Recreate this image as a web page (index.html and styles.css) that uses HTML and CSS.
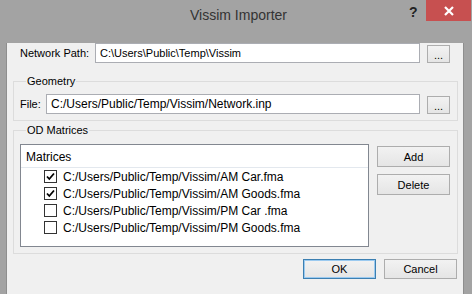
FILE: index.html
```html
<!DOCTYPE html>
<html lang="en">
  <head>
    <meta charset="utf-8" />
    <title>Vissim Importer</title>
    <link rel="stylesheet" href="styles.css">
  </head>
  <body>
    <div class="window">
      <div class="titlebar">
        <div class="title">Vissim Importer</div>
        <div class="help">?</div>
        <div class="close">
          <svg width="12" height="10" viewBox="0 0 12 10">
            <path d="M2 1 L10 9 M10 1 L2 9" stroke="#fff" stroke-width="2.2" />
          </svg>
        </div>
      </div>
      <div class="client">
        <div class="row path-row">
          <label class="path-label">Network Path:</label>
          <div class="input path-input">C:\Users\Public\Temp\Vissim</div>
          <button class="btn browse">...</button>
        </div>

        <fieldset class="group geometry">
          <legend>Geometry</legend>
          <div class="row">
            <label class="file-label">File:</label>
            <div class="input file-input">C:/Users/Public/Temp/Vissim/Network.inp</div>
            <button class="btn browse">...</button>
          </div>
        </fieldset>

        <fieldset class="group od">
          <legend>OD Matrices</legend>
          <div class="od-body">
            <div class="list">
              <div class="list-header">Matrices</div>
              <div class="item"><span class="check on"></span>C:/Users/Public/Temp/Vissim/AM Car.fma</div>
              <div class="item"><span class="check on"></span>C:/Users/Public/Temp/Vissim/AM Goods.fma</div>
              <div class="item"><span class="check"></span>C:/Users/Public/Temp/Vissim/PM Car .fma</div>
              <div class="item"><span class="check"></span>C:/Users/Public/Temp/Vissim/PM Goods.fma</div>
            </div>
            <div class="side">
              <button class="btn wide">Add</button>
              <button class="btn wide">Delete</button>
            </div>
          </div>
        </fieldset>

        <div class="footer">
          <button class="btn wide default">OK</button>
          <button class="btn wide">Cancel</button>
        </div>
      </div>
    </div>
  </body>
</html>
```

FILE: styles.css
```css
* {
  margin: 0;
  box-sizing: border-box;
}
body {
  font-family: "Liberation Sans", Arial, sans-serif;
  font-size: 11px;
  color: #000;
  background: #a3a3a3;
}
.window {
  width: 472px;
  height: 294px;
  background: #a3a3a3;
  padding: 0 8px 0 6px;
}
.titlebar {
  height: 30px;
  display: flex;
}
.title {
  flex: 1;
  text-align: center;
  font-size: 14px;
  color: #333;
  padding-top: 7px;
  padding-left: 62px;
}
.help {
  width: 20px;
  font-size: 14px;
  font-weight: bold;
  color: #222;
  padding-top: 4px;
  margin-right: -3px;
}
.close {
  width: 45px;
  height: 21px;
  background: #c75050;
  margin-right: -7px;
  display: flex;
  justify-content: center;
  align-items: center;
}
.client {
  height: 258px;
  background: #f0f0f0;
  border: 1px solid #8e8e8e;
  border-top: none;
  padding: 0 5px 0 6px;
}
.row {
  display: flex;
  align-items: center;
  height: 20px;
}
.path-row {
  margin-top: 13px;
  padding-left: 7px;
}
.path-label {
  width: 75px;
}
.input {
  height: 20px;
  background: #fff;
  border: 1px solid #abadb3;
  padding: 3px 4px;
  line-height: 13px;
  white-space: nowrap;
}
.path-input {
  width: 325px;
}
.file-label {
  width: 26px;
}
.file-input {
  width: 374px;
  font-size: 12px;
}
.btn {
  font-family: inherit;
  font-size: 11px;
  color: #000;
  border: 1px solid #adadad;
  background: linear-gradient(#f2f2f2, #e5e5e5);
  padding: 0;
}
.browse {
  width: 23px;
  height: 18px;
  margin-left: 7px;
  margin-top: 2px;
  line-height: 18px;
}
.group {
  border: 1px solid #dcdcdc;
  padding: 5px 6px 6px 6px;
  min-width: 0;
}
.group legend {
  padding: 0 1px;
  margin-left: 6px;
  line-height: 16px;
}
.geometry {
  margin-top: 10px;
}
.od {
  margin-top: 1px;
  padding-top: 6px;
}
.od-body {
  display: flex;
}
.list {
  width: 349px;
  height: 103px;
  background: #fff;
  border: 1px solid #828790;
}
.list-header {
  height: 23px;
  border-bottom: 1px solid #e3e8ee;
  padding: 5px 5px 0;
  font-size: 12px;
}
.item {
  height: 17px;
  display: flex;
  align-items: center;
  padding-left: 23px;
  white-space: nowrap;
  font-size: 12px;
}
.check {
  width: 13px;
  height: 13px;
  border: 1px solid #333;
  background: #fff;
  margin-right: 6px;
}
.check.on {
  background: #fff url("data:image/svg+xml;utf8,<svg xmlns='http://www.w3.org/2000/svg' width='11' height='11'><path d='M2 5.5 L4.3 8 L9 2.5' fill='none' stroke='black' stroke-width='1.8'/></svg>") no-repeat center;
}
.side {
  display: flex;
  flex-direction: column;
  gap: 7px;
  margin-left: 8px;
  padding-top: 2px;
}
.wide {
  width: 73px;
  height: 21px;
}
.footer {
  display: flex;
  justify-content: flex-end;
  gap: 8px;
  margin-top: 5px;
  padding-right: 1px;
}
.footer .wide {
  height: 20px;
}
.default {
  border-color: #3c7fb1;
  box-shadow: inset 0 0 0 1px #9bcaf0;
}
```
